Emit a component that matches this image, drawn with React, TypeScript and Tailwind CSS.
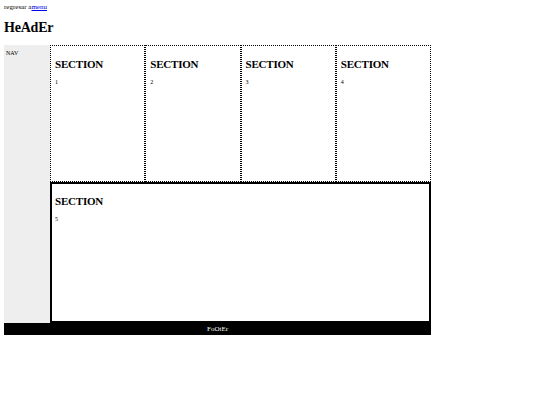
import React from 'react';

const sections = ['1', '2', '3', '4'];

export default function App() {
  return (
    <div className="w-[540px] h-[405px] bg-white px-[4px] pt-[3px] text-black" style={{ fontFamily: '"Liberation Serif", "Times New Roman", serif' }}>
      <p className="text-[7px] leading-[8px]">
        regresar a<a href="#" className="text-[#0000ee] underline">menu</a>
      </p>
      <h1 className="text-[14px] leading-[17px] font-bold mt-[8px] mb-[9px] tracking-[-0.2px]">HeAdEr</h1>

      <div className="grid w-[427px] grid-cols-[46px_1fr_1fr_1fr_1fr] grid-rows-[137px_141px_12px]">
        <nav className="row-span-2 bg-[#eeeeee] px-[2px] pt-[4px] text-[6px] leading-[8px]">NAV</nav>

        {sections.map((n) => (
          <section key={n} className="border border-dotted border-black px-[4px]">
            <h2 className="text-[11px] leading-[14px] font-bold mt-[11px] tracking-[-0.2px]">SECTION</h2>
            <p className="text-[6px] leading-[8px] mt-[7px]">{n}</p>
          </section>
        ))}

        <section className="col-span-4 border-2 border-solid border-black px-[3px]">
          <h2 className="text-[11px] leading-[14px] font-bold mt-[10px] tracking-[-0.2px]">SECTION</h2>
          <p className="text-[6px] leading-[8px] mt-[7px]">5</p>
        </section>

        <footer className="col-span-5 bg-black text-white text-center text-[7px] leading-[12px]">FoOtEr</footer>
      </div>
    </div>
  );
}
